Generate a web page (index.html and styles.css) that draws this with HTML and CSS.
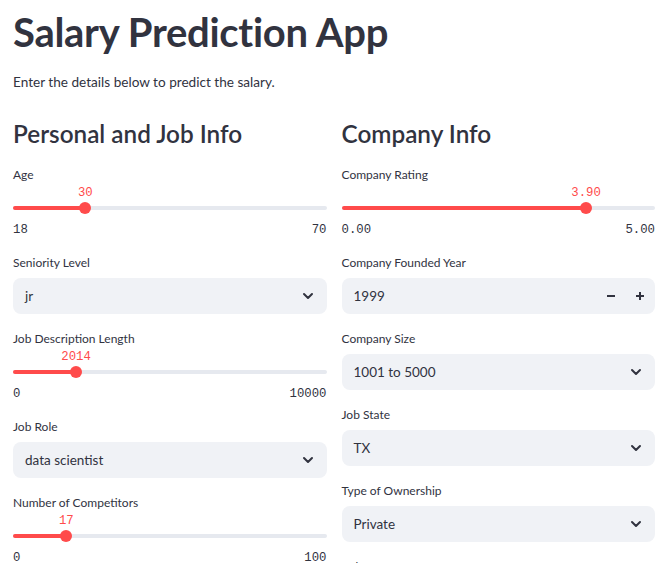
FILE: index.html
```html
<!DOCTYPE html>
<html>
<head>
<meta charset="utf-8">
<link rel="stylesheet" href="styles.css">
</head>
<body>
<main class="main">
  <h1 class="title">Salary Prediction App</h1>
  <p class="intro">Enter the details below to predict the salary.</p>
  <div class="columns">
    <section class="col">
      <h2 class="section-title">Personal and Job Info</h2>
      <div class="widgets">
        <div class="widget slider">
          <div class="label">Age</div>
          <div class="slider-body">
            <div class="track">
              <div class="fill" style="width:23.08%"></div>
              <div class="thumb" style="left:23.08%"><span class="thumb-value">30</span></div>
            </div>
          </div>
          <div class="ticks"><span>18</span><span>70</span></div>
        </div>
        <div class="widget">
          <div class="label">Seniority Level</div>
          <div class="select"><span>jr</span><svg class="chev" viewBox="0 0 12 8" width="12" height="8"><path d="M2 2 L6 6 L10 2" fill="none" stroke="#31333f" stroke-width="2" stroke-linecap="round" stroke-linejoin="round"/></svg></div>
        </div>
        <div class="widget slider">
          <div class="label">Job Description Length</div>
          <div class="slider-body">
            <div class="track">
              <div class="fill" style="width:20.14%"></div>
              <div class="thumb" style="left:20.14%"><span class="thumb-value">2014</span></div>
            </div>
          </div>
          <div class="ticks"><span>0</span><span>10000</span></div>
        </div>
        <div class="widget">
          <div class="label">Job Role</div>
          <div class="select"><span>data scientist</span><svg class="chev" viewBox="0 0 12 8" width="12" height="8"><path d="M2 2 L6 6 L10 2" fill="none" stroke="#31333f" stroke-width="2" stroke-linecap="round" stroke-linejoin="round"/></svg></div>
        </div>
        <div class="widget slider">
          <div class="label">Number of Competitors</div>
          <div class="slider-body">
            <div class="track">
              <div class="fill" style="width:17%"></div>
              <div class="thumb" style="left:17%"><span class="thumb-value">17</span></div>
            </div>
          </div>
          <div class="ticks"><span>0</span><span>100</span></div>
        </div>
      </div>
    </section>
    <section class="col">
      <h2 class="section-title">Company Info</h2>
      <div class="widgets">
        <div class="widget slider">
          <div class="label">Company Rating</div>
          <div class="slider-body">
            <div class="track">
              <div class="fill" style="width:78%"></div>
              <div class="thumb" style="left:78%"><span class="thumb-value">3.90</span></div>
            </div>
          </div>
          <div class="ticks"><span>0.00</span><span>5.00</span></div>
        </div>
        <div class="widget">
          <div class="label">Company Founded Year</div>
          <div class="select number"><span>1999</span>
            <div class="steppers">
              <svg viewBox="0 0 10 10" width="10" height="10"><path d="M1 5 H9" stroke="#31333f" stroke-width="2"/></svg>
              <svg viewBox="0 0 10 10" width="10" height="10"><path d="M1 5 H9 M5 1 V9" stroke="#31333f" stroke-width="2"/></svg>
            </div>
          </div>
        </div>
        <div class="widget">
          <div class="label">Company Size</div>
          <div class="select"><span>1001 to 5000</span><svg class="chev" viewBox="0 0 12 8" width="12" height="8"><path d="M2 2 L6 6 L10 2" fill="none" stroke="#31333f" stroke-width="2" stroke-linecap="round" stroke-linejoin="round"/></svg></div>
        </div>
        <div class="widget">
          <div class="label">Job State</div>
          <div class="select"><span>TX</span><svg class="chev" viewBox="0 0 12 8" width="12" height="8"><path d="M2 2 L6 6 L10 2" fill="none" stroke="#31333f" stroke-width="2" stroke-linecap="round" stroke-linejoin="round"/></svg></div>
        </div>
        <div class="widget">
          <div class="label">Type of Ownership</div>
          <div class="select"><span>Private</span><svg class="chev" viewBox="0 0 12 8" width="12" height="8"><path d="M2 2 L6 6 L10 2" fill="none" stroke="#31333f" stroke-width="2" stroke-linecap="round" stroke-linejoin="round"/></svg></div>
        </div>
        <div class="widget">
          <div class="label">Industry</div>
        </div>
      </div>
    </section>
  </div>
</main>
</body>
</html>
```

FILE: styles.css
```css
* { box-sizing: border-box; }
html, body { margin: 0; padding: 0; background: #ffffff; }
body {
  font-family: "Source Sans Pro", Lato, "Noto Sans", sans-serif;
  color: #31333f;
  overflow: hidden;
}
.main {
  padding: 8px 17px 0 13px;
}
.title {
  margin: 0;
  font-size: 40px;
  line-height: 48px;
  font-weight: 700;
  letter-spacing: -0.3px;
  color: #31333f;
}
.intro {
  margin: 16px 0 0;
  font-size: 13.6px;
  line-height: 20px;
}
.columns {
  display: grid;
  grid-template-columns: 1fr 1fr;
  column-gap: 15px;
  margin-top: 26px;
}
.section-title {
  margin: 0;
  font-size: 24.3px;
  line-height: 32px;
  font-weight: 600;
}
.widgets {
  display: flex;
  flex-direction: column;
  gap: 16px;
  margin-top: 16px;
}
.label {
  font-size: 12px;
  line-height: 18px;
  height: 18px;
}
.slider-body {
  height: 32px;
  position: relative;
}
.track {
  position: absolute;
  left: 0; right: 0;
  top: 22px;
  height: 4px;
  border-radius: 2px;
  background: #e6e9ef;
}
.fill {
  height: 4px;
  border-radius: 2px;
  background: #ff4b4b;
}
.thumb {
  position: absolute;
  top: -4px;
  width: 12px;
  height: 12px;
  margin-left: -6px;
  border-radius: 50%;
  background: #ff4b4b;
}
.thumb-value {
  position: absolute;
  left: 50%;
  bottom: 14px;
  transform: translateX(-50%);
  font-family: "Liberation Mono", "DejaVu Sans Mono", monospace;
  font-size: 12.3px;
  line-height: 14px;
  color: #ff4b4b;
  white-space: nowrap;
}
.ticks {
  display: flex;
  justify-content: space-between;
  margin-top: 9px;
  margin-bottom: 3px;
  height: 10px;
  font-family: "Liberation Mono", "DejaVu Sans Mono", monospace;
  font-size: 12.3px;
  line-height: 10px;
  color: #31333f;
}
.select {
  margin-top: 6px;
  height: 36px;
  border-radius: 8px;
  background: #f0f2f6;
  display: flex;
  align-items: center;
  justify-content: space-between;
  padding: 0 13px 0 12px;
  font-size: 13.5px;
}
.chev { display: block; }
.number { padding-right: 10px; }
.steppers {
  display: flex;
  gap: 19px;
}
.steppers svg { display: block; }
```
